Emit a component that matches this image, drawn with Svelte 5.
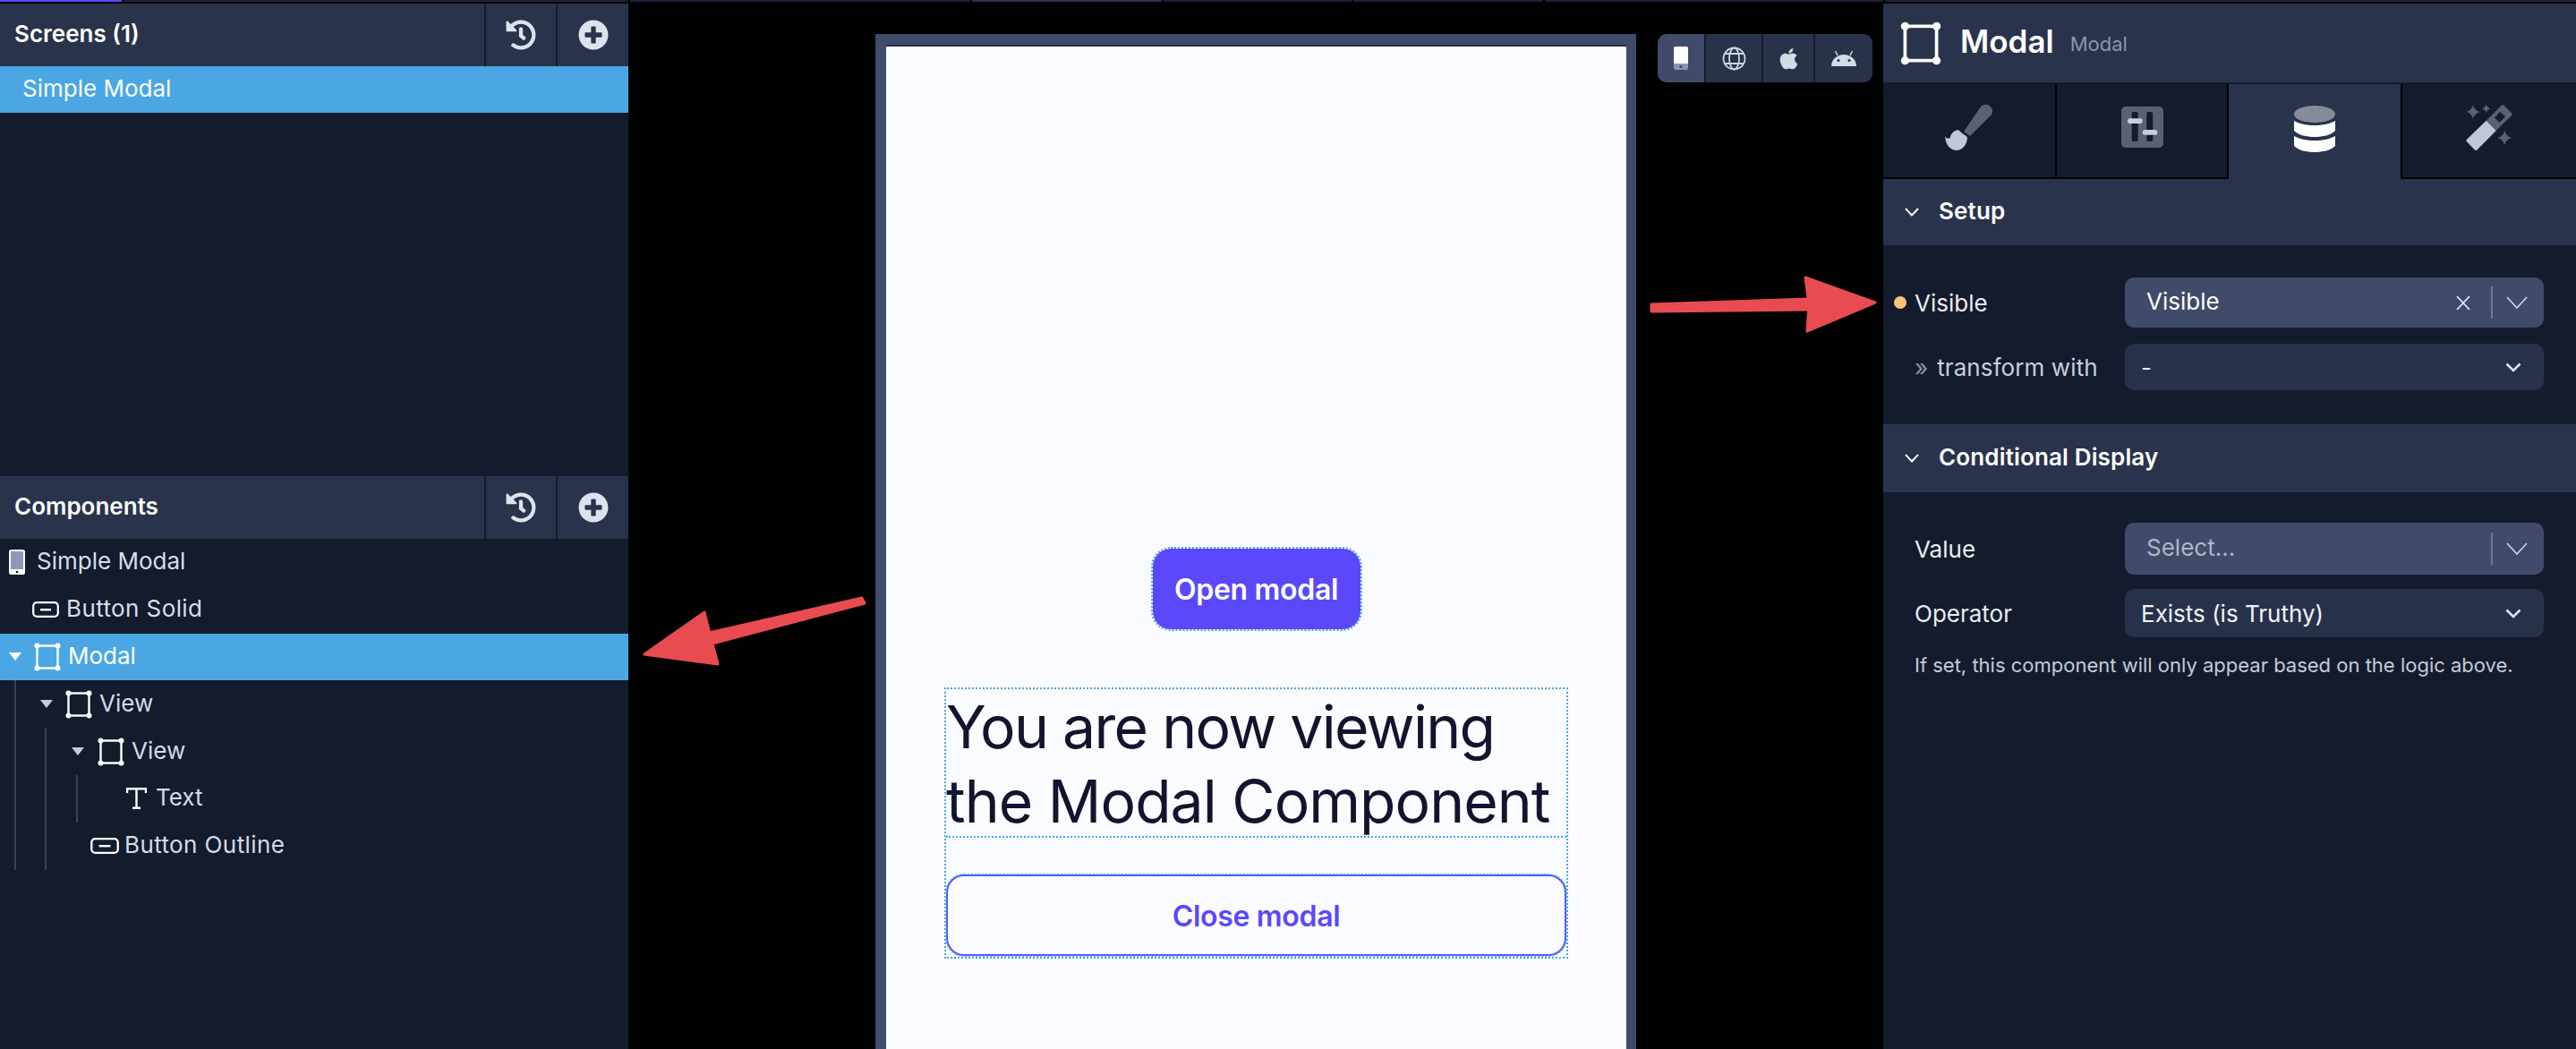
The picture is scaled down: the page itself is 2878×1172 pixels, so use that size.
{#snippet historyIcon()}
  <svg class="hd-icon" viewBox="0 0 512 512"><path fill="currentColor" d="M504 255.531c.253 136.64-111.18 248.372-247.82 248.468-59.015.042-113.223-20.53-155.822-54.911-11.077-8.94-11.905-25.541-1.839-35.607l11.267-11.267c8.609-8.609 22.353-9.551 31.891-1.984C173.062 425.135 212.781 440 256 440c101.705 0 184-82.311 184-184 0-101.705-82.311-184-184-184-48.814 0-93.149 18.969-126.068 49.932l50.754 50.754c10.08 10.08 2.941 27.314-11.313 27.314H24c-8.837 0-16-7.163-16-16V38.627c0-14.254 17.234-21.393 27.314-11.314l49.372 49.372C129.209 34.136 189.552 8 256 8c136.81 0 247.747 110.78 248 247.531zm-180.912 78.784l9.823-12.63c8.138-10.463 6.253-25.542-4.21-33.679L288 256.349V152c0-13.255-10.745-24-24-24h-16c-13.255 0-24 10.745-24 24v135.651l65.409 50.874c10.463 8.137 25.541 6.253 33.679-4.21z"/></svg>
{/snippet}
{#snippet plusIcon()}
  <svg class="hd-icon" viewBox="0 0 512 512"><path fill="currentColor" d="M256 8C119 8 8 119 8 256s111 248 248 248 248-111 248-248S393 8 256 8zm144 276c0 6.6-5.4 12-12 12h-92v92c0 6.6-5.4 12-12 12h-56c-6.6 0-12-5.4-12-12v-92h-92c-6.6 0-12-5.4-12-12v-56c0-6.6 5.4-12 12-12h92v-92c0-6.6 5.4-12 12-12h56c6.6 0 12 5.4 12 12v92h92c6.6 0 12 5.4 12 12v56z"/></svg>
{/snippet}
{#snippet panelHeader(title)}
  <header class="panel-head">
    <span class="panel-title">{title}</span>
    <button class="head-btn first">{@render historyIcon()}</button>
    <button class="head-btn">{@render plusIcon()}</button>
  </header>
{/snippet}
{#snippet viewIcon(w, h)}
  <svg width={w} height={h} viewBox="0 0 30 32" class="view-icon">
    <rect x="3.5" y="3.5" width="23" height="25" fill="none" stroke="#fff" stroke-width="2.4"/>
    <circle cx="3.5" cy="3.5" r="3" fill="#fff"/><circle cx="26.5" cy="3.5" r="3" fill="#fff"/>
    <circle cx="3.5" cy="28.5" r="3" fill="#fff"/><circle cx="26.5" cy="28.5" r="3" fill="#fff"/>
  </svg>
{/snippet}
{#snippet btnIcon(w)}
  <svg width={w} height="18" viewBox="0 0 30 18" class="btn-icon" preserveAspectRatio="none">
    <rect x="1.2" y="1.2" width="27.6" height="15.6" rx="4" fill="none" stroke="#fff" stroke-width="2.2"/>
    <rect x="9" y="8" width="12" height="2.4" fill="#fff"/>
  </svg>
{/snippet}
{#snippet caret(c)}
  <svg class="caret" width="14" height="9" viewBox="0 0 14 9"><path d="M0 0h14L7 9Z" fill={c}/></svg>
{/snippet}
{#snippet thinChevron()}
  <svg class="thin-chev" width="24" height="14" viewBox="0 0 24 14"><path d="M1 1l11 12L23 1" fill="none" stroke="#cfd6e4" stroke-width="1.6"/></svg>
{/snippet}
{#snippet boldChevron()}
  <svg class="bold-chev" width="18" height="11" viewBox="0 0 18 11"><path d="M1.5 1.5L9 9l7.5-7.5" fill="none" stroke="#dfe4ee" stroke-width="2.6"/></svg>
{/snippet}
{#snippet sectionChevron()}
  <svg width="16" height="10" viewBox="0 0 16 10"><path d="M1 1l7 7.5L15 1" fill="none" stroke="#fff" stroke-width="1.9"/></svg>
{/snippet}

<div class="strip">
  <i class="s purple" style="width:136px"></i>
  <i class="s" style="width:564px"></i>
  <i class="s" style="width:380px"></i>
  <i class="s light" style="width:212px"></i>
  <i class="s" style="width:210px"></i>
  <i class="s" style="width:212px"></i>
  <i class="s" style="width:378px"></i>
  <i class="s grow"></i>
</div>

<div class="app">
  <aside class="left">
    {@render panelHeader('Screens (1)')}
    <div class="screens">
      <div class="row selected screen-row"><span>Simple Modal</span></div>
    </div>
    {@render panelHeader('Components')}
    <div class="tree">
      <div class="row r-root">
        <svg width="18" height="28" viewBox="0 0 18 28" class="phone"><rect width="18" height="28" rx="2.5" fill="#fff"/><rect x="2" y="2" width="14" height="20" fill="#8e98b8"/><circle cx="9" cy="25" r="1.3" fill="#141b2c"/></svg>
        <span>Simple Modal</span>
      </div>
      <div class="row r-solid">{@render btnIcon(30)}<span class="wide">Button Solid</span></div>
      <div class="row selected r-modal">{@render caret('#fff')}{@render viewIcon(30, 32)}<span>Modal</span></div>
      <div class="nest n1">
        <div class="row r-view1">{@render caret('#c3cbdd')}{@render viewIcon(30, 32)}<span>View</span></div>
        <div class="nest n2">
          <div class="row r-view2">{@render caret('#c3cbdd')}{@render viewIcon(30, 32)}<span>View</span></div>
          <div class="nest n3">
            <div class="row r-text">
              <svg width="23" height="24" viewBox="0 0 23 24"><path d="M1 6V1.2h21V6M11.5 1.2v21.6M7 22.8h9" fill="none" stroke="#fff" stroke-width="2.4"/></svg>
              <span>Text</span>
            </div>
          </div>
          <div class="row r-outline">{@render btnIcon(32)}<span class="wide">Button Outline</span></div>
        </div>
      </div>
    </div>
  </aside>

  <main class="canvas">
    <div class="device">
      <button class="open">Open modal</button>
      <div class="modal-box">
        <div class="heading"><span class="line">You are now viewing</span> <span class="line second">the Modal Component</span></div>
        <div class="gap"></div>
        <button class="close">Close modal</button>
      </div>
    </div>
    <div class="platforms">
      <div class="pf active">
        <svg width="16" height="26" viewBox="0 0 16 26"><rect width="16" height="26" rx="2" fill="#8d95ab"/><path d="M0 2a2 2 0 0 1 2-2h12a2 2 0 0 1 2 2v17H0Z" fill="#fff"/><circle cx="8" cy="22.5" r="1.6" fill="#3c4560"/></svg>
      </div>
      <div class="pf w64">
        <svg width="27" height="27" viewBox="0 0 27 27" fill="none" stroke="#cdd5e3" stroke-width="1.8"><circle cx="13.5" cy="13.5" r="12"/><ellipse cx="13.5" cy="13.5" rx="5.5" ry="12"/><path d="M3 8h21M3 19h21"/></svg>
      </div>
      <div class="pf w58">
        <svg width="21" height="25" viewBox="0 0 384 480"><path fill="#d3dbe8" transform="translate(0 -12)" d="M318.7 268.7c-.2-36.7 16.4-64.4 50-84.8-18.8-26.9-47.2-41.7-84.7-44.6-35.5-2.8-74.3 20.7-88.5 20.7-15 0-49.4-19.7-76.4-19.7C63.3 141.2 4 184.8 4 273.5q0 39.3 14.4 81.2c12.8 36.7 59 126.7 107.2 125.2 25.2-.6 43-17.9 75.8-17.9 31.8 0 48.3 17.9 76.4 17.9 48.6-.7 90.4-82.5 102.6-119.3-65.2-30.7-61.7-90-61.7-91.9zm-56.6-164.2c27.3-32.4 24.8-61.9 24-72.5-24.1 1.4-52 16.4-67.9 34.9-17.5 19.8-27.8 44.3-25.6 71.9 26.1 2 49.9-11.4 69.5-34.3z"/></svg>
      </div>
      <div class="pf grow">
        <svg width="28" height="18" viewBox="0 0 28 18"><path d="M0 18A14 13 0 0 1 28 18Z" fill="#d3dbe8"/><path d="M7 6L4.5 1M21 6l2.5-5" stroke="#d3dbe8" stroke-width="1.5"/><circle cx="8" cy="11.5" r="1.6" fill="#283249"/><circle cx="20" cy="11.5" r="1.6" fill="#283249"/></svg>
      </div>
    </div>
  </main>

  <aside class="right">
    <header class="comp-head">
      {@render viewIcon(46, 49)}
      <span class="comp-name">Modal</span>
      <span class="comp-type">Modal</span>
    </header>
    <nav class="tabs">
      <div class="tab">
        <svg width="54" height="52" viewBox="0 0 54 52"><path d="M39 4.5a7.5 7.5 0 0 1 13 7.5L28 36l-7-5Z" fill="#5a6173"/><path d="M.3 36.5c1.5 2.5 4 2.5 5.5 1.5.5-4.5 4-8 9-9 2 2 6 5 10 8 .5 8-5 15-12 15C6 52 0 45 .3 36.5Z" fill="#bfc7d9"/></svg>
      </div>
      <div class="tab">
        <svg width="47" height="46" viewBox="0 0 47 46"><rect width="47" height="46" rx="5" fill="#5a6173"/><rect x="11.7" y="6" width="7" height="33" rx="2" fill="#141b2c"/><rect x="28.3" y="6" width="7" height="33" rx="2" fill="#141b2c"/><rect x="7" y="13.3" width="16.7" height="5.7" rx="2.8" fill="#c5cde0"/><rect x="23.7" y="26" width="16.7" height="5.7" rx="2.8" fill="#c5cde0"/></svg>
      </div>
      <div class="tab on">
        <svg width="46" height="52" viewBox="0 0 46 52"><ellipse cx="23" cy="9.5" rx="23" ry="9.5" fill="#858b9a"/><path d="M0 17C5 20 14 22 23 22S41 20 46 17V28C41 33 32 35 23 35S5 33 0 28Z" fill="#fff"/><path d="M0 34C5 37 14 39 23 39S41 37 46 34V45C41 50 32 52 23 52S5 50 0 45Z" fill="#fff"/></svg>
      </div>
      <div class="tab last">
        <svg width="53" height="53" viewBox="0 0 53 53"><path fill-rule="evenodd" d="M22.7 18.7L40 1.5a2 2 0 0 1 2.4 0l8.8 9a2 2 0 0 1 0 2.4L33.7 30ZM37.7 9l-5.7 6.7 5.7 5 6.6-6.7Z" fill="#5a6173"/><path d="M22.7 18.7L33.7 30 12.5 51.5a2 2 0 0 1-2.6 0L1 42.3a2 2 0 0 1 0-2.6Z" fill="#bfc7d9"/><path d="M8 1.3Q9.5 7.5 15.7 9 9.5 10.5 8 16.7 6.5 10.5.3 9 6.5 7.5 8 1.3ZM22.7.6Q23.6 4.4 27.4 5.3 23.6 6.2 22.7 10 21.8 6.2 18 5.3 21.8 4.4 22.7.6ZM43.3 30Q44.8 36.5 51.3 38 44.8 39.5 43.3 46 41.8 39.5 35.3 38 41.8 36.5 43.3 30Z" fill="#5a6173"/></svg>
      </div>
    </nav>
    <div class="section-head">{@render sectionChevron()}<span>Setup</span></div>
    <div class="form setup">
      <div class="field">
        <label><i class="dot"></i>Visible</label>
        <div class="select tall filled">
          <span class="val">Visible</span>
          <svg class="clear" width="16" height="17" viewBox="0 0 16 17"><path d="M1 1l14 15M15 1L1 16" stroke="#e5e9f1" stroke-width="1.8" fill="none"/></svg>
          <i class="sep"></i>
          {@render thinChevron()}
        </div>
      </div>
      <div class="field">
        <label class="muted"><span class="arrows">»</span><span class="tw">transform with</span></label>
        <div class="select plain h52"><span>-</span>{@render boldChevron()}</div>
      </div>
    </div>
    <div class="section-head s2">{@render sectionChevron()}<span>Conditional Display</span></div>
    <div class="form cond">
      <div class="field">
        <label>Value</label>
        <div class="select tall filled">
          <span class="val placeholder">Select...</span>
          <i class="sep"></i>
          {@render thinChevron()}
        </div>
      </div>
      <div class="field">
        <label>Operator</label>
        <div class="select plain h54"><span>Exists (is Truthy)</span>{@render boldChevron()}</div>
      </div>
      <p class="help">If set, this component will only appear based on the logic above.</p>
    </div>
  </aside>

  <svg class="arrows-layer" width="2878" height="1172" viewBox="0 0 2878 1172">
    <g fill="#e84c50" stroke="#e84c50" stroke-width="3" stroke-linejoin="round">
      <path d="M1845 340L2020 334V346L1845 348Z"/>
      <path d="M2017 310L2095 338L2019 370L2021 340Z"/>
      <path d="M963 668L966 674L796 719L792 707Z"/>
      <path d="M787 684L720 731L802 742L794 712Z"/>
    </g>
  </svg>
</div>

<style>
  :global(body) { margin: 0; background: #000; }
  * { box-sizing: border-box; }
  .strip { display: flex; gap: 2px; height: 4px; padding-bottom: 2px; width: 2878px; background: #000; }
  .s { display: block; height: 2px; background: #1b2035; }
  .s.purple { background: #5a45ff; }
  .s.light { background: #283249; }
  .s.grow { flex: 1; }

  .app {
    position: relative;
    display: grid;
    grid-template-columns: 702px 1402px 774px;
    width: 2878px;
    height: 1168px;
    overflow: hidden;
    font-family: Inter, "Liberation Sans", sans-serif;
    font-size: 26px;
    color: #d9dfea;
  }
  .left { background: #141b2c; display: flex; flex-direction: column; }
  .panel-head { display: flex; align-items: center; height: 70px; flex: none; background: #29334c; }
  .panel-title { flex: 1; padding: 0 0 3px 16px; font-weight: 600; color: #fff; }
  .head-btn {
    width: 80px; height: 70px; padding: 0; display: flex; align-items: center; justify-content: center;
    background: none; border: 0; border-left: 2px solid #151b2a; color: #dde3ee;
  }
  .head-btn:last-child { width: 81px; }
  .hd-icon { width: 34px; height: 34px; }
  .screens { height: 458px; flex: none; }
  .row { height: 52.8px; display: flex; align-items: center; }
  .row span { margin-bottom: 3px; }
  .row .wide { letter-spacing: 0.4px; }
  .selected { background: #4ba7e3; color: #fff; }
  .screen-row { padding-left: 25px; height: 52px; }
  .tree { flex: 1; }
  .r-root { padding-left: 10px; gap: 13px; }
  .r-solid { padding-left: 36px; gap: 8px; }
  .r-modal { padding-left: 10px; }
  .r-modal .caret { margin-right: 14px; }
  .view-icon, .btn-icon { flex: none; }
  .nest { border-left: 2px solid #3a4256; }
  .n1 { margin-left: 16px; }
  .n2 { margin-left: 32px; }
  .n3 { margin-left: 33px; height: 52.8px; }
  .r-view1 { padding-left: 27px; }
  .r-view1 .caret { margin-right: 14px; }
  .r-view2 { padding-left: 28px; }
  .r-view2 .caret { margin-right: 15px; }
  .view-icon + span { margin-left: 8px; }
  .r-text { padding-left: 54px; gap: 10px; }
  .r-outline { padding-left: 49px; gap: 6px; }
  .r-view1 span, .r-view2 span, .r-outline span, .r-text span { color: #d5dbe8; }

  .canvas { position: relative; background: #000; padding: 34px 0 0 276px; }
  .device {
    width: 850px; height: 1400px;
    border: 12px solid #404a6a; border-right-width: 11px;
    background: #fbfcff;
    box-shadow: inset 0 2px 0 #262c40;
    padding-top: 563px;
    display: flex; flex-direction: column; align-items: center;
  }
  .open {
    width: 232px; height: 90px; border: 0; border-radius: 20px; padding: 0;
    background: #5a48fa; color: #fff;
    font: 600 32px Inter, sans-serif;
    letter-spacing: -0.3px;
    outline: 2px dotted #4ba7e3;
    outline-offset: 0;
  }
  .modal-box {
    margin-top: 65px;
    width: 697px;
    height: 303px;
    border: 2px dotted #4ba7e3;
    display: flex; flex-direction: column;
  }
  .heading {
    height: 166px;
    border-bottom: 2px dotted #4ba7e3;
    font-size: 66px; line-height: 83px; font-weight: 400; color: #12142f;
    letter-spacing: -1.7px;
    padding: 1px 0 0 0;
  }
  .line { display: block; white-space: nowrap; }
  .second { letter-spacing: -0.95px; }
  .gap { height: 41px; flex: none; }
  .close {
    height: 91px; border: 2px solid #5a48fa; border-radius: 20px; background: #fbfcff;
    color: #5a48fa; font: 600 32px Inter, sans-serif;
    letter-spacing: -0.3px; padding: 2px 0 0;
    outline: 2px dotted #4ba7e3;
    outline-offset: -1px;
  }

  .platforms {
    position: absolute; left: 1150px; top: 34px; width: 240px; height: 54px;
    display: flex; gap: 2px; background: #151b2a; border-radius: 10px; overflow: hidden;
  }
  .pf { display: flex; align-items: center; justify-content: center; background: #283249; height: 54px; }
  .pf.active { width: 52px; background: #404a6a; }
  .w64 { width: 62px; }
  .w58 { width: 56px; }
  .pf.grow { flex: 1; }

  .right { background: #141b2c; display: flex; flex-direction: column; }
  .comp-head { height: 88px; flex: none; background: #29334c; display: flex; align-items: center; padding-left: 19px; }
  .comp-head :global(svg) { margin-right: 13px; }
  .comp-name { font-size: 35px; font-weight: 600; color: #fff; margin-right: 18px; padding-bottom: 4px; }
  .comp-type { font-size: 22px; color: #8b95ad; padding-top: 2px; }
  .tabs { display: grid; grid-template-columns: 194px 192px 194px 194px; margin-top: 2px; height: 106px; flex: none; }
  .tab {
    display: flex; align-items: center; justify-content: center;
    height: 106px; padding-bottom: 8px;
    background: #141b2c; border-right: 2px solid #000; border-bottom: 2px solid #000;
  }
  .tab svg { display: block; }
  .tab.on { background: #29334c; border-bottom: 0; border-right: 2px solid #000; padding-bottom: 6px; }
  .tab.last { border-right: 0; }
  .section-head {
    height: 74px; flex: none; background: #29334c; display: flex; align-items: center; gap: 22px;
    padding-left: 24px; font-weight: 600; color: #fff;
  }
  .section-head span { padding-bottom: 3px; letter-spacing: 0.15px; }
  .section-head.s2 { height: 76px; }
  .form { padding: 36px 36px 0 35px; }
  .setup { height: 200px; }
  .cond { padding-top: 34px; }
  .field { display: flex; align-items: center; margin-bottom: 18px; }
  .cond .field { margin-bottom: 16px; }
  label { width: 235px; flex: none; display: flex; align-items: center; color: #e8ecf3; white-space: pre; }
  label.muted { color: #c8cfde; }
  .arrows { color: #8b95ad; }
  .tw { margin-left: 10px; letter-spacing: 0.1px; }
  .dot { width: 14px; height: 14px; border-radius: 50%; background: #f3c777; margin-left: -23px; margin-right: 9px; }
  .select {
    flex: none; width: 468px; border-radius: 10px; display: flex; align-items: center; font-size: 26px; color: #fff;
  }
  .tall { height: 56px; }
  .cond .tall { height: 58px; }
  .filled { background: #404b69; padding-left: 24px; padding-right: 18px; }
  .val { flex: 1; padding-bottom: 4px; }
  .placeholder { color: #aeb6c8; }
  .clear { margin-right: 23px; }
  .sep { width: 2px; height: 36px; background: #6f7a96; margin-right: 15px; }
  .plain { background: #28314a; padding: 0 25px 0 18px; justify-content: space-between; color: #f2f4f8; }
  .h52 { height: 52px; }
  .h54 { height: 54px; }
  .help { margin: 18px 0 0; font-size: 22px; color: #c4cbdb; white-space: nowrap; }
  .arrows-layer { position: absolute; left: 0; top: -4px; pointer-events: none; }
</style>
